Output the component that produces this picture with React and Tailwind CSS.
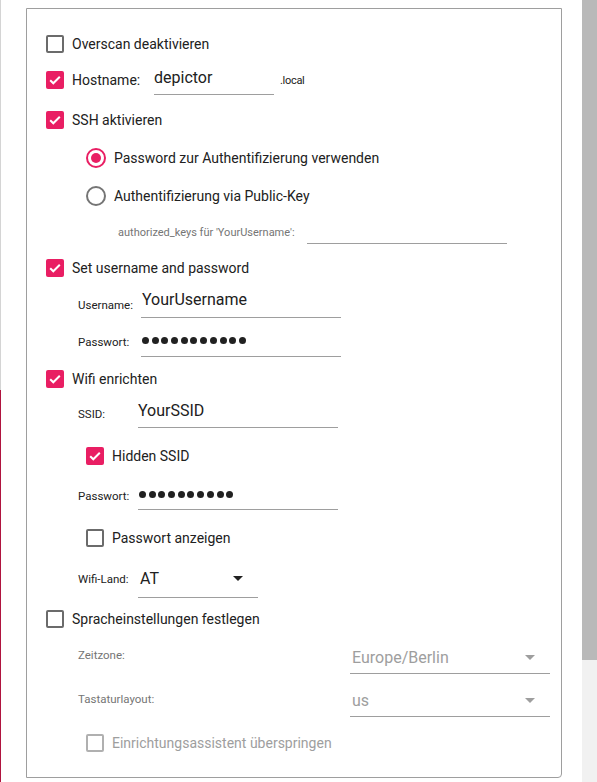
import React from "react";

const font = { fontFamily: "Roboto, 'Liberation Sans', sans-serif" };

function Check({ on, disabled }) {
  if (on) {
    return (
      <span className="w-[18px] h-[18px] shrink-0 rounded-[2px] bg-[#e91e63] flex items-center justify-center">
        <svg width="14" height="14" viewBox="0 0 14 14">
          <path d="M2.2 7.2l3.1 3.1L11.8 3.8" fill="none" stroke="#fff" strokeWidth="2" />
        </svg>
      </span>
    );
  }
  return (
    <span
      className={
        "w-[18px] h-[18px] shrink-0 rounded-[2px] border-2 " +
        (disabled ? "border-[#b0b0b0]" : "border-[#6b6b6b]")
      }
    />
  );
}

function Radio({ on }) {
  return (
    <span
      className={
        "w-[20px] h-[20px] shrink-0 rounded-full border-2 flex items-center justify-center " +
        (on ? "border-[#e91e63]" : "border-[#757575]")
      }
    >
      {on && <span className="w-[10px] h-[10px] rounded-full bg-[#e91e63]" />}
    </span>
  );
}

function Dots({ n }) {
  return (
    <div className="flex gap-[2.7px] pl-px">
      {Array.from({ length: n }).map((_, i) => (
        <span key={i} className="w-[7px] h-[7px] rounded-full bg-[#212121]" />
      ))}
    </div>
  );
}

function Arrow({ color }) {
  return (
    <svg width="10" height="5" viewBox="0 0 10 5">
      <path d="M0 0h10L5 5z" fill={color} />
    </svg>
  );
}

export default function App() {
  return (
    <div className="flex w-[597px] h-[782px] overflow-hidden bg-white text-[#212121]" style={font}>
      {/* linker Rand */}
      <div className="w-px flex flex-col">
        <div className="h-[390px] bg-[#d4d4d4]" />
        <div className="flex-1 bg-[#b0143f]" />
      </div>

      <div className="flex-1 pt-[8px] pl-[25px]">
        <div className="w-[536px] h-[770px] border border-[#9e9e9e] rounded-br-[4px] pt-[17px] pl-[19px] flex flex-col text-[14px]">
          <div className="h-[36px] flex items-center gap-[8px]">
            <Check />
            <span>Overscan deaktivieren</span>
          </div>

          <div className="h-[36px] flex items-center">
            <Check on />
            <span className="ml-[8px] w-[82px]">Hostname:</span>
            <div className="w-[120px] h-[30px] border-b border-[#9e9e9e] flex items-center pb-[4px] text-[16px]">
              depictor
            </div>
            <span className="ml-[6px] mt-[2px] text-[11px] tracking-[-0.3px]">.local</span>
          </div>

          <div className="h-[44px] flex items-center gap-[8px]">
            <Check on />
            <span>SSH aktivieren</span>
          </div>

          <div className="h-[32px] flex items-center gap-[8px] pl-[40px]">
            <Radio on />
            <span>Password zur Authentifizierung verwenden</span>
          </div>

          <div className="h-[44px] flex items-center gap-[8px] pl-[40px]">
            <Radio />
            <span>Authentifizierung via Public-Key</span>
          </div>

          <div className="h-[30px] flex items-center pl-[72px]">
            <span className="w-[189px] text-[11px] text-[#757575]">authorized_keys für 'YourUsername':</span>
            <div className="w-[200px] h-[22px] border-b border-[#9e9e9e]" />
          </div>

          <div className="h-[40px] flex items-center gap-[8px]">
            <Check on />
            <span>Set username and password</span>
          </div>

          <div className="h-[30px] flex items-center pl-[32px]">
            <span className="w-[63px] text-[11.5px] pt-[6px]">Username:</span>
            <div className="w-[200px] h-[30px] border-b border-[#9e9e9e] flex items-center pb-[6px] pl-px text-[16px]">
              YourUsername
            </div>
          </div>

          <div className="h-[48px] flex items-center pl-[32px]">
            <span className="w-[63px] text-[11.5px] pt-[2px]">Passwort:</span>
            <div className="w-[200px] h-[30px] border-b border-[#9e9e9e] flex items-center pb-[2px]">
              <Dots n={11} />
            </div>
          </div>

          <div className="h-[26px] flex items-center gap-[8px]">
            <Check on />
            <span>Wifi enrichten</span>
          </div>

          <div className="h-[44px] flex items-center pl-[32px]">
            <span className="w-[60px] text-[11.5px] pt-[2px]">SSID:</span>
            <div className="w-[200px] h-[28px] border-b border-[#9e9e9e] flex items-center pb-[6px] text-[16px]">
              YourSSID
            </div>
          </div>

          <div className="h-[40px] flex items-center gap-[8px] pl-[40px]">
            <Check on />
            <span>Hidden SSID</span>
          </div>

          <div className="h-[40px] flex items-center pl-[32px]">
            <span className="w-[60px] text-[11.5px] pt-[2px]">Passwort:</span>
            <div className="w-[200px] h-[28px] border-b border-[#9e9e9e] flex items-center pb-[2px]">
              <Dots n={10} />
            </div>
          </div>

          <div className="h-[44px] flex items-center gap-[8px] pl-[40px]">
            <Check />
            <span>Passwort anzeigen</span>
          </div>

          <div className="h-[40px] flex items-center pl-[32px]">
            <span className="w-[60px] text-[11.5px]">Wifi-Land:</span>
            <div className="w-[120px] h-[36px] border-b border-[#9e9e9e] flex items-center justify-between pl-[2px] pr-[15px] pb-[2px] text-[16px]">
              <span>AT</span>
              <Arrow color="#212121" />
            </div>
          </div>

          <div className="h-[38px] flex items-center gap-[8px]">
            <Check />
            <span>Spracheinstellungen festlegen</span>
          </div>

          <div className="h-[36px] flex items-center pl-[32px]">
            <span className="w-[272px] text-[11.5px] text-[#757575]">Zeitzone:</span>
            <div className="w-[200px] h-[36px] border-b border-[#9e9e9e] flex items-center justify-between pl-[2px] pr-[15px] pt-[4px] text-[16px] text-[#9e9e9e]">
              <span>Europe/Berlin</span>
              <Arrow color="#9e9e9e" />
            </div>
          </div>

          <div className="h-[52px] flex items-center pl-[32px]">
            <span className="w-[272px] text-[11.5px] text-[#757575]">Tastaturlayout:</span>
            <div className="w-[200px] h-[34px] border-b border-[#9e9e9e] flex items-center justify-between pl-[2px] pr-[15px] pt-[2px] text-[16px] text-[#9e9e9e]">
              <span>us</span>
              <Arrow color="#9e9e9e" />
            </div>
          </div>

          <div className="h-[34px] flex items-center gap-[8px] pl-[40px] text-[#9e9e9e]">
            <Check disabled />
            <span>Einrichtungsassistent überspringen</span>
          </div>
        </div>
      </div>

      {/* Scrollleiste */}
      <div className="w-[15px] flex flex-col bg-[#f1f1f1]">
        <div className="h-[660px] bg-[#b9b9b9]" />
      </div>
    </div>
  );
}
